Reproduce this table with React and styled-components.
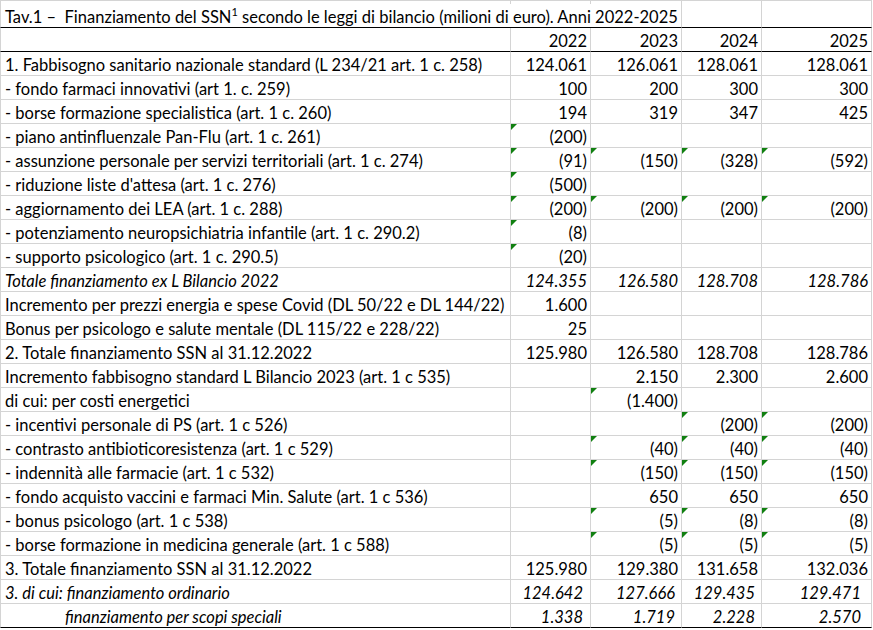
import React from "react";
import styled, { createGlobalStyle } from "styled-components";

const GlobalStyle = createGlobalStyle`
  html, body {
    margin: 0;
    padding: 0;
    background: #ffffff;
  }
  body {
    font-family: "Lato", "Liberation Sans", sans-serif;
    color: #000000;
  }
`;

const GRID = "#d4d4d4";

const Sheet = styled.table`
  border-collapse: separate;
  border-spacing: 0;
  table-layout: fixed;
  width: 872px;
  font-size: 16.5px;
  border-top: 1px solid ${GRID};
`;

const Sliver = styled.tr`
  height: 3px;
  td {
    height: 3px;
    padding: 0;
    border-bottom: none;
  }
`;

const Row = styled.tr`
  height: 24px;
`;

const Cell = styled.td`
  position: relative;
  box-sizing: border-box;
  height: 24px;
  padding: 3px ${(p) => (p.$pad ? p.$pad : 3)}px 0 ${(p) => (p.$indent ? p.$indent : 4)}px;
  line-height: 20px;
  white-space: nowrap;
  overflow: visible;
  text-align: ${(p) => (p.$num ? "right" : "left")};
  font-style: ${(p) => (p.$italic ? "italic" : "normal")};
  border-right: 1px solid ${GRID};
  border-bottom: 1px solid ${(p) => (p.$thick ? "#000000" : GRID)};
  vertical-align: top;

  &:first-child {
    border-left: 1px solid ${GRID};
  }

  &::before {
    content: "";
    display: ${(p) => (p.$flag ? "block" : "none")};
    position: absolute;
    left: 0;
    top: 0;
    width: 0;
    height: 0;
    border-top: 6px solid #118011;
    border-right: 6px solid transparent;
  }
`;

const Sup = styled.sup`
  font-size: 11px;
  line-height: 0;
  vertical-align: 7px;
`;

const rows = [
  { label: "1. Fabbisogno sanitario nazionale standard (L 234/21 art. 1 c. 258)", v: ["124.061", "126.061", "128.061", "128.061"] },
  { label: "- fondo farmaci innovativi (art 1. c. 259)", v: ["100", "200", "300", "300"] },
  { label: "- borse formazione specialistica (art. 1 c. 260)", v: ["194", "319", "347", "425"] },
  { label: "- piano antinfluenzale Pan-Flu (art. 1 c. 261)", v: ["(200)", "", "", ""], f: [1, 0, 0, 0] },
  { label: "- assunzione personale per servizi territoriali (art. 1 c. 274)", v: ["(91)", "(150)", "(328)", "(592)"], f: [1, 1, 1, 1] },
  { label: "- riduzione liste d'attesa (art. 1 c. 276)", v: ["(500)", "", "", ""], f: [1, 0, 0, 0] },
  { label: "- aggiornamento dei LEA (art. 1 c. 288)", v: ["(200)", "(200)", "(200)", "(200)"], f: [1, 1, 1, 1] },
  { label: "- potenziamento neuropsichiatria infantile (art. 1 c. 290.2)", v: ["(8)", "", "", ""], f: [1, 0, 0, 0] },
  { label: "- supporto psicologico (art. 1 c. 290.5)", v: ["(20)", "", "", ""], f: [1, 0, 0, 0] },
  { label: "Totale finanziamento ex L Bilancio 2022", v: ["124.355", "126.580", "128.708", "128.786"], italic: true },
  { label: "Incremento per prezzi energia e spese Covid (DL 50/22 e DL 144/22)", v: ["1.600", "", "", ""] },
  { label: "Bonus per psicologo e salute mentale (DL 115/22 e 228/22)", v: ["25", "", "", ""] },
  { label: "2. Totale finanziamento SSN al 31.12.2022", v: ["125.980", "126.580", "128.708", "128.786"] },
  { label: "Incremento fabbisogno standard L Bilancio 2023 (art. 1 c 535)", v: ["", "2.150", "2.300", "2.600"] },
  { label: "di cui: per costi energetici", v: ["", "(1.400)", "", ""], f: [0, 1, 0, 0] },
  { label: "- incentivi personale di PS (art. 1 c 526)", v: ["", "", "(200)", "(200)"], f: [0, 0, 1, 1] },
  { label: "- contrasto antibioticoresistenza (art. 1 c 529)", v: ["", "(40)", "(40)", "(40)"], f: [0, 1, 1, 1] },
  { label: "- indennità alle farmacie (art. 1 c 532)", v: ["", "(150)", "(150)", "(150)"], f: [0, 1, 1, 1] },
  { label: "- fondo acquisto vaccini e farmaci Min. Salute (art. 1 c 536)", v: ["", "650", "650", "650"] },
  { label: "- bonus psicologo (art. 1 c 538)", v: ["", "(5)", "(8)", "(8)"], f: [0, 1, 1, 1] },
  { label: "- borse formazione in medicina generale (art. 1 c 588)", v: ["", "(5)", "(5)", "(5)"], f: [0, 1, 1, 1] },
  { label: "3. Totale finanziamento SSN al 31.12.2022", v: ["125.980", "129.380", "131.658", "132.036"] },
  { label: "3. di cui: finanziamento ordinario", v: ["124.642", "127.666", "129.435", "129.471"], italic: true, shift: true },
  { label: "finanziamento per scopi speciali", v: ["1.338", "1.719", "2.228", "2.570"], italic: true, shift: true, indent: 64, last: true },
];

const widths = [511, 80, 91, 80, 110];
const shiftPad = [7, 6, 6, 10];

export default function App() {
  return (
    <>
      <GlobalStyle />
      <Sheet>
        <colgroup>
          {widths.map((w, i) => (
            <col key={i} style={{ width: w }} />
          ))}
        </colgroup>
        <tbody>
          <Sliver>
            {widths.map((w, i) => (
              <Cell key={i} />
            ))}
          </Sliver>
          <Row>
            <Cell colSpan={3} $thick>
              Tav.1 –&nbsp; Finanziamento del SSN<Sup>1</Sup> secondo le leggi di bilancio (milioni di euro). Anni 2022-2025
            </Cell>
            <Cell $thick />
            <Cell $thick />
          </Row>
          <Row>
            <Cell $thick />
            {["2022", "2023", "2024", "2025"].map((y) => (
              <Cell key={y} $num $thick>
                {y}
              </Cell>
            ))}
          </Row>
          {rows.map((r, i) => (
            <Row key={i}>
              <Cell $italic={r.italic} $indent={r.indent} $thick={r.last}>
                {r.label}
              </Cell>
              {r.v.map((val, j) => (
                <Cell
                  key={j}
                  $num
                  $italic={r.italic}
                  $flag={r.f ? r.f[j] : 0}
                  $pad={r.shift ? shiftPad[j] : 3}
                  $thick={r.last}
                >
                  {val}
                </Cell>
              ))}
            </Row>
          ))}
        </tbody>
      </Sheet>
    </>
  );
}
